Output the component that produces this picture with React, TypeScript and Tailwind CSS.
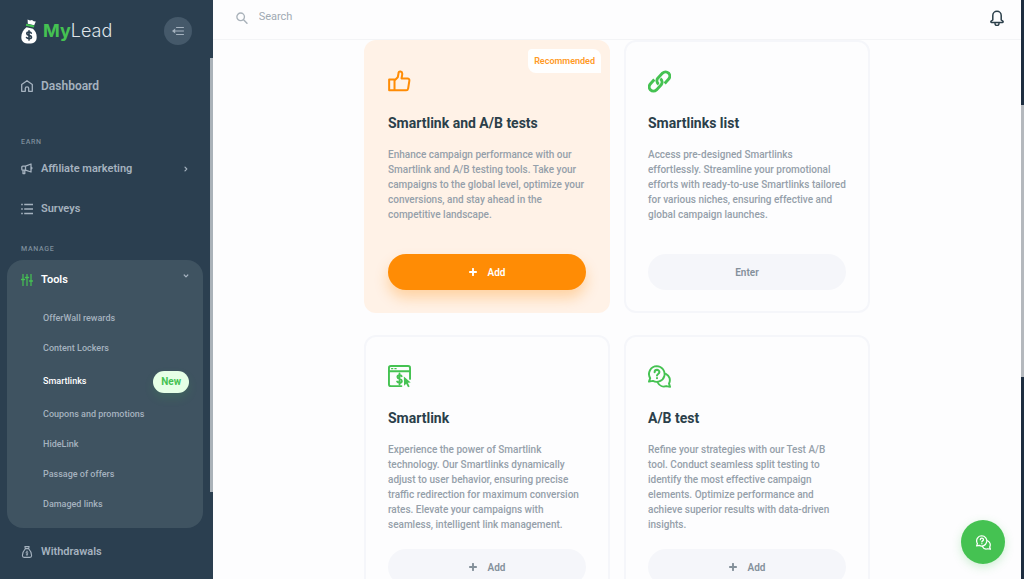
import type { ReactNode } from 'react'

type IconProps = { className?: string }

const strokeProps = {
  fill: 'none',
  stroke: 'currentColor',
  strokeLinecap: 'round',
  strokeLinejoin: 'round',
} as const

function MoneyBagLogo() {
  return (
    <svg viewBox="0 0 16 25" className="h-[25px] w-4" aria-hidden="true">
      <path d="M6.6.6 9 1.600l2-.6 1.700 1.200 2.100.2-1.600 3.800-6.400-1.400Z" fill="#fff" />
      <path d="m5.200 4.800 8.200 1.800-.5 2-8-1.900Z" fill="#45c252" />
      <path d="M5.500 8.200C2.500 10.600.3 14 .3 18c0 4.600 2.500 6.600 7.700 6.600s7.700-2 7.700-6.600c0-3.500-1.500-6.200-3.700-8.300Z" fill="#fff" />
      <path d="M10.300 14.100c-.5-.7-1.300-1-2.300-1-1.300 0-2.200.6-2.200 1.600 0 2.300 4.700 1 4.700 3.300 0 1-1 1.700-2.400 1.700-1.100 0-2-.4-2.600-1.100M8 11.700v9.400" {...strokeProps} stroke="#2b3f50" strokeWidth="1.600" />
    </svg>
  )
}

function CollapseIcon() {
  return (
    <svg viewBox="0 0 12 10" className="h-[10px] w-3" aria-hidden="true">
      <path d="M4.500 1.500h7M3 5h8.500M4.500 8.500h7" {...strokeProps} strokeWidth="1" />
      <path d="M0 5 3.200 2.600v4.800Z" fill="currentColor" />
    </svg>
  )
}

function HomeIcon({ className }: IconProps) {
  return (
    <svg viewBox="0 0 12 12" className={className} aria-hidden="true">
      <path d="M.7 4.500 6 .7l5.300 3.800v6.800H7.700V8.500a1.700 1.700 0 0 0-3.400 0v2.800H.7Z" {...strokeProps} strokeWidth="1.300" />
    </svg>
  )
}

function MegaphoneIcon({ className }: IconProps) {
  return (
    <svg viewBox="0 0 12 12" className={className} aria-hidden="true">
      <path d="M4.500 3.200 10 1v8L4.500 7.200H1.800a1 1 0 0 1-1-1v-2a1 1 0 0 1 1-1ZM4.500 3.200v4M2 7.200v3.300h1.800V7.400M10.200 4a1.200 1.200 0 0 1 0 2.200" {...strokeProps} strokeWidth="1.300" />
    </svg>
  )
}

function ListIcon({ className }: IconProps) {
  return (
    <svg viewBox="0 0 12 12" className={className} aria-hidden="true">
      <path d="M3.200 1.500H12M3.200 6H12M3.200 10.500H12M.2 1.500h1.600M.2 6h1.600M.2 10.500h1.600" fill="none" stroke="currentColor" strokeWidth="1.700" />
    </svg>
  )
}

function SlidersIcon({ className }: IconProps) {
  return (
    <svg viewBox="0 0 12 12" className={className} aria-hidden="true">
      <path d="M2 .3v11.400M6 .3v11.400M10 .3v11.400" {...strokeProps} strokeWidth="1.200" />
      <path d="M.6 5.500h2.800M4.600 3.500h2.800M8.600 7h2.800" {...strokeProps} strokeWidth="1.600" />
    </svg>
  )
}

function BagIcon({ className }: IconProps) {
  return (
    <svg viewBox="0 0 12 12" className={className} aria-hidden="true">
      <path d="m4.300 2.600-.4-2h4.200l-.4 2ZM4.300 2.800C2.600 4.500 1.400 7 1.400 9.500c0 1.400.5 1.900 1.700 1.900h5.800c1.200 0 1.700-.5 1.700-1.900 0-2.500-1.200-5-2.900-6.700" {...strokeProps} strokeWidth="1.100" />
      <path d="M7 6c-.3-.4-2-.5-2 .4s2 .7 2 1.600-1.700.8-2 .4M6 5v4.600" {...strokeProps} strokeWidth=".8" />
    </svg>
  )
}

function ThumbIcon({ className }: IconProps) {
  return (
    <svg viewBox="0 0 24 24" className={className} aria-hidden="true">
      <path d="M1.200 9.800h5.600v11.400H1.200ZM6.800 11l3.400-3.400 1-5.200c.2-1.300 3.700-1.200 3.700 1.600 0 1.700-.6 3.300-.8 4.800h6.300c1.300 0 2.100 1 1.900 2.300l-1.300 8.300c-.2 1.100-1 1.800-2.100 1.800H6.800" {...strokeProps} strokeWidth="2.100" />
    </svg>
  )
}

function ChainIcon({ className }: IconProps) {
  return (
    <svg viewBox="0 0 24 24" className={className} aria-hidden="true">
      <path d="M11.200 14.800a4.300 4.300 0 0 1-1-6.200l5-5.400a4.600 4.600 0 0 1 6.200 0 4.600 4.600 0 0 1 .2 6.200l-4.200 4.700" {...strokeProps} strokeLinecap="butt" strokeWidth="3" />
      <path d="M12.800 9.200a4.300 4.300 0 0 1 1 6.200l-5 5.400a4.600 4.600 0 0 1-6.200 0 4.600 4.600 0 0 1-.2-6.200l4.200-4.700" {...strokeProps} strokeLinecap="butt" strokeWidth="3" />
    </svg>
  )
}

function BrowserIcon({ className }: IconProps) {
  return (
    <svg viewBox="0 0 24 24" className={className} aria-hidden="true">
      <path d="M14 22H3a2 2 0 0 1-2-2V3a2 2 0 0 1 2-2h18a2 2 0 0 1 2 2v11.500M1 6.500h22" {...strokeProps} strokeWidth="2" />
      <path d="M3.700 3.800h1.300M7.200 3.800h1.300" {...strokeProps} strokeWidth="1.300" />
      <path d="M14.300 11.700c-.5-.8-1.300-1.100-2.200-1.100-1.400 0-2.300.8-2.300 1.900 0 2.700 4.700 1.300 4.700 4.100 0 1.200-1 2-2.400 2-1.200 0-2.100-.5-2.600-1.300M12 8.800v11.600" {...strokeProps} strokeWidth="1.900" />
      <path d="m16.500 12 7.200 6.300-3 .3 1.900 3.800-1.700.9-1.900-3.800-2.200 2.100Z" fill="currentColor" />
    </svg>
  )
}

function ChatQuestionIcon({ className }: IconProps) {
  return (
    <svg viewBox="0 0 24 24" className={className} aria-hidden="true">
      <path d="M9.200 1.200a8.200 8.200 0 1 1-4 15.400L1 17.400l1.300-3.700A8.200 8.200 0 0 1 9.200 1.200Z" {...strokeProps} strokeWidth="2" />
      <path d="M18.600 9.200a7.200 7.200 0 0 1 3.300 10l1.100 3.600-4-.8a7.200 7.200 0 0 1-8.800-3.600" {...strokeProps} strokeWidth="2" />
      <path d="M6.900 7.500c0-3.200 5-3.200 5-.1 0 2-2.500 1.900-2.500 3.600M9.400 13.700v.2" {...strokeProps} strokeWidth="2.100" />
    </svg>
  )
}

function BellIcon() {
  return (
    <svg viewBox="0 0 14 16" className="h-4 w-[14px]" aria-hidden="true">
      <path d="M2.800 10V5.500a4.200 4.200 0 0 1 8.400 0V10l1.700 1.200c.5.500.2 1.300-.5 1.300H1.600c-.7 0-1-.8-.5-1.300Z" {...strokeProps} strokeWidth="1.500" />
      <path d="M5 13.500a2 2 0 0 0 4 0" {...strokeProps} strokeWidth="1.500" />
    </svg>
  )
}

function SearchIcon() {
  return (
    <svg viewBox="0 0 12 12" className="size-3" aria-hidden="true">
      <circle cx="4.800" cy="4.800" r="3.900" {...strokeProps} strokeWidth="1.400" />
      <path d="m7.800 7.800 3.500 3.500" {...strokeProps} strokeWidth="1.500" />
    </svg>
  )
}

function PlusIcon() {
  return (
    <svg viewBox="0 0 8 8" className="size-2" aria-hidden="true">
      <path d="M4 .8v6.400M.8 4h6.400" {...strokeProps} strokeWidth="1.900" />
    </svg>
  )
}

const toolLinks = [
  { label: 'OfferWall rewards' },
  { label: 'Content Lockers' },
  { label: 'Smartlinks', isNew: true },
  { label: 'Coupons and promotions' },
  { label: 'HideLink' },
  { label: 'Passage of offers' },
  { label: 'Damaged links' },
]

const cards = [
  {
    title: 'Smartlink and A/B tests',
    text: 'Enhance campaign performance with our Smartlink and A/B testing tools. Take your campaigns to the global level, optimize your conversions, and stay ahead in the competitive landscape.',
    icon: ThumbIcon,
    action: 'Add',
    recommended: true,
  },
  {
    title: 'Smartlinks list',
    text: 'Access pre-designed Smartlinks\neffortlessly. Streamline your promotional efforts with ready-to-use Smartlinks tailored for various niches, ensuring effective and global campaign launches.',
    icon: ChainIcon,
    action: 'Enter',
  },
  {
    title: 'Smartlink',
    text: 'Experience the power of Smartlink technology. Our Smartlinks dynamically adjust to user behavior, ensuring precise traffic redirection for maximum conversion rates. Elevate your campaigns with seamless, intelligent link management.',
    icon: BrowserIcon,
    action: 'Add',
  },
  {
    title: 'A/B test',
    text: 'Refine your strategies with our Test A/B\ntool. Conduct seamless split testing to identify the most effective campaign elements. Optimize performance and achieve superior results with data-driven insights.',
    icon: ChatQuestionIcon,
    action: 'Add',
  },
]

function NavLink({ icon, children }: { icon: ReactNode; children: ReactNode }) {
  return (
    <a href="#" className="flex h-10 items-center gap-2 px-[21px] text-[11px] font-semibold text-[#a5b2bf]">
      {icon}
      {children}
    </a>
  )
}

function Sidebar() {
  return (
    <aside className="relative flex w-[213px] shrink-0 flex-col overflow-hidden bg-[#2b3f50]">
      {/* Logo */}
      <div className="flex h-[62px] shrink-0 items-center justify-between px-[21px]">
        <a href="#" className="flex items-center gap-1.5 font-['Inter',sans-serif] text-lg text-white">
          <MoneyBagLogo />
          <span>
            <span className="font-bold text-[#45c252]">My</span>
            <span className="font-light text-[#dfe4e8]">Lead</span>
          </span>
        </a>
        <button aria-label="Collapse menu" className="flex size-7 items-center justify-center rounded-full bg-[#45596a] text-[#a5b2bf]">
          <CollapseIcon />
        </button>
      </div>

      {/* Navigation */}
      <nav className="flex flex-col pt-1">
        <NavLink icon={<HomeIcon className="size-3" />}>
          <span className="text-xs">Dashboard</span>
        </NavLink>
        <h2 className="mt-[31px] px-[21px] text-[7px] leading-[10px] font-medium tracking-widest text-[#7d8d9b]">EARN</h2>
        <div className="mt-[2px]">
          <NavLink icon={<MegaphoneIcon className="size-3" />}>
            <span className="flex-1">Affiliate marketing</span>
            <svg viewBox="0 0 6 6" className="mr-[3px] size-1.5" aria-hidden="true">
              <path d="m2 1.200 1.800 1.800L2 4.800" {...strokeProps} strokeWidth="1.200" />
            </svg>
          </NavLink>
          <NavLink icon={<ListIcon className="size-3" />}>Surveys</NavLink>
        </div>
        <h2 className="mt-[15px] px-[21px] text-[7px] leading-[10px] font-medium tracking-widest text-[#7d8d9b]">MANAGE</h2>

        {/* Tools group */}
        <div className="mt-[6px] mr-[10px] ml-[7px] rounded-2xl bg-[#3f5361] pb-2">
          <button className="flex h-10 w-full items-center gap-2 px-[14px] text-[11px] font-semibold text-white">
            <SlidersIcon className="size-3 text-[#45c252]" />
            Tools
            <svg viewBox="0 0 6 6" className="mb-2 ml-auto size-1.5 text-[#a5b2bf]" aria-hidden="true">
              <path d="M1.200 2 3 3.800 4.800 2" {...strokeProps} strokeWidth="1.200" />
            </svg>
          </button>
          <ul className="pt-1">
            {toolLinks.map((link) => (
              <li key={link.label}>
                <a
                  href="#"
                  className={`flex items-center justify-between pr-[14px] pl-9 text-[9px] font-medium ${
                    link.isNew ? 'h-9 text-white' : 'h-[30px] text-[#a5b2bf]'
                  }`}
                >
                  {link.label}
                  {link.isNew && (
                    <span className="rounded-full bg-[#e6ffe6] px-2 text-[10px] leading-[22px] font-bold text-[#45c252] shadow-[0_5px_10px_rgba(69,194,82,0.15)]">
                      New
                    </span>
                  )}
                </a>
              </li>
            ))}
          </ul>
        </div>
        <div className="mt-1">
          <NavLink icon={<BagIcon className="size-3" />}>Withdrawals</NavLink>
        </div>
      </nav>

      {/* Scroll thumb */}
      <div className="absolute top-[58px] right-0 h-3/4 w-[3px] bg-[#aab2b9]" />
    </aside>
  )
}

export default function App() {
  return (
    <div className="flex h-screen overflow-hidden bg-[#fdfdfe] font-['Roboto',sans-serif]">
      <Sidebar />

      <div className="flex min-w-0 flex-1 flex-col">
        {/* Top bar */}
        <header className="flex h-10 shrink-0 items-center justify-between border-b border-[#f3f4f6] pr-[17px] pb-1 pl-[23px]">
          <label className="flex flex-1 items-center gap-[11px] text-[#a9b2ba]">
            <SearchIcon />
            <input
              type="search"
              aria-label="Search"
              placeholder="Search"
              className="w-full bg-transparent text-[11px] outline-none placeholder:text-[#a0aab3]"
            />
          </label>
          <button aria-label="Notifications" className="text-[#2b3f4a]">
            <BellIcon />
          </button>
        </header>

        {/* Cards */}
        <main className="min-h-0 flex-1 overflow-hidden">
          <div className="mx-auto grid max-w-[506px] grid-cols-2 gap-x-[14px] gap-y-[22px]">
            {cards.map((card) => (
              <section
                key={card.title}
                className={`relative flex flex-col rounded-xl border-2 px-[22px] pt-7 pb-[21px] ${
                  card.recommended ? 'border-[#fff2e7] bg-[#fff2e7]' : 'border-[#f5f6fa]'
                }`}
              >
                {card.recommended && (
                  <span className="absolute top-[7px] right-[7px] rounded-tl-sm rounded-tr-lg rounded-bl-lg bg-white px-1.5 text-[9px] leading-6 font-semibold text-[#ff9a26]">
                    Recommended
                  </span>
                )}
                <card.icon className={`size-[23px] ${card.recommended ? 'text-[#ff8c05]' : 'text-[#45c252]'}`} />
                <h2 className="mt-5 text-sm leading-5 font-bold text-[#2b3f4a]">{card.title}</h2>
                <p className="-mr-0.5 mt-[14px] min-h-[90px] text-[10px] leading-[15px] font-medium whitespace-pre-line text-[#95a0aa]">
                  {card.text}
                </p>
                <button
                  className={`mt-[17px] flex h-9 items-center justify-center gap-[11px] rounded-full text-[10px] font-semibold ${
                    card.recommended
                      ? 'bg-[#ff8c05] text-white shadow-[0_8px_14px_rgba(255,140,5,0.3)]'
                      : 'bg-[#f5f6fa] text-[#84909a]'
                  }`}
                >
                  {card.action === 'Add' && <PlusIcon />}
                  {card.action}
                </button>
              </section>
            ))}
          </div>
        </main>
      </div>

      {/* Page scrollbar */}
      <div className="flex w-[3px] shrink-0 flex-col bg-[#1d2d3f]">
        <div className="mt-[105px] h-[47%] bg-[#b4b8bd]" />
      </div>

      <button
        aria-label="Help chat"
        className="fixed right-[19px] bottom-[15px] flex size-11 items-center justify-center rounded-full bg-[#45c252] text-white shadow-[0_3px_10px_rgba(69,194,82,0.25)]"
      >
        <ChatQuestionIcon className="size-[15px]" />
      </button>
    </div>
  )
}
